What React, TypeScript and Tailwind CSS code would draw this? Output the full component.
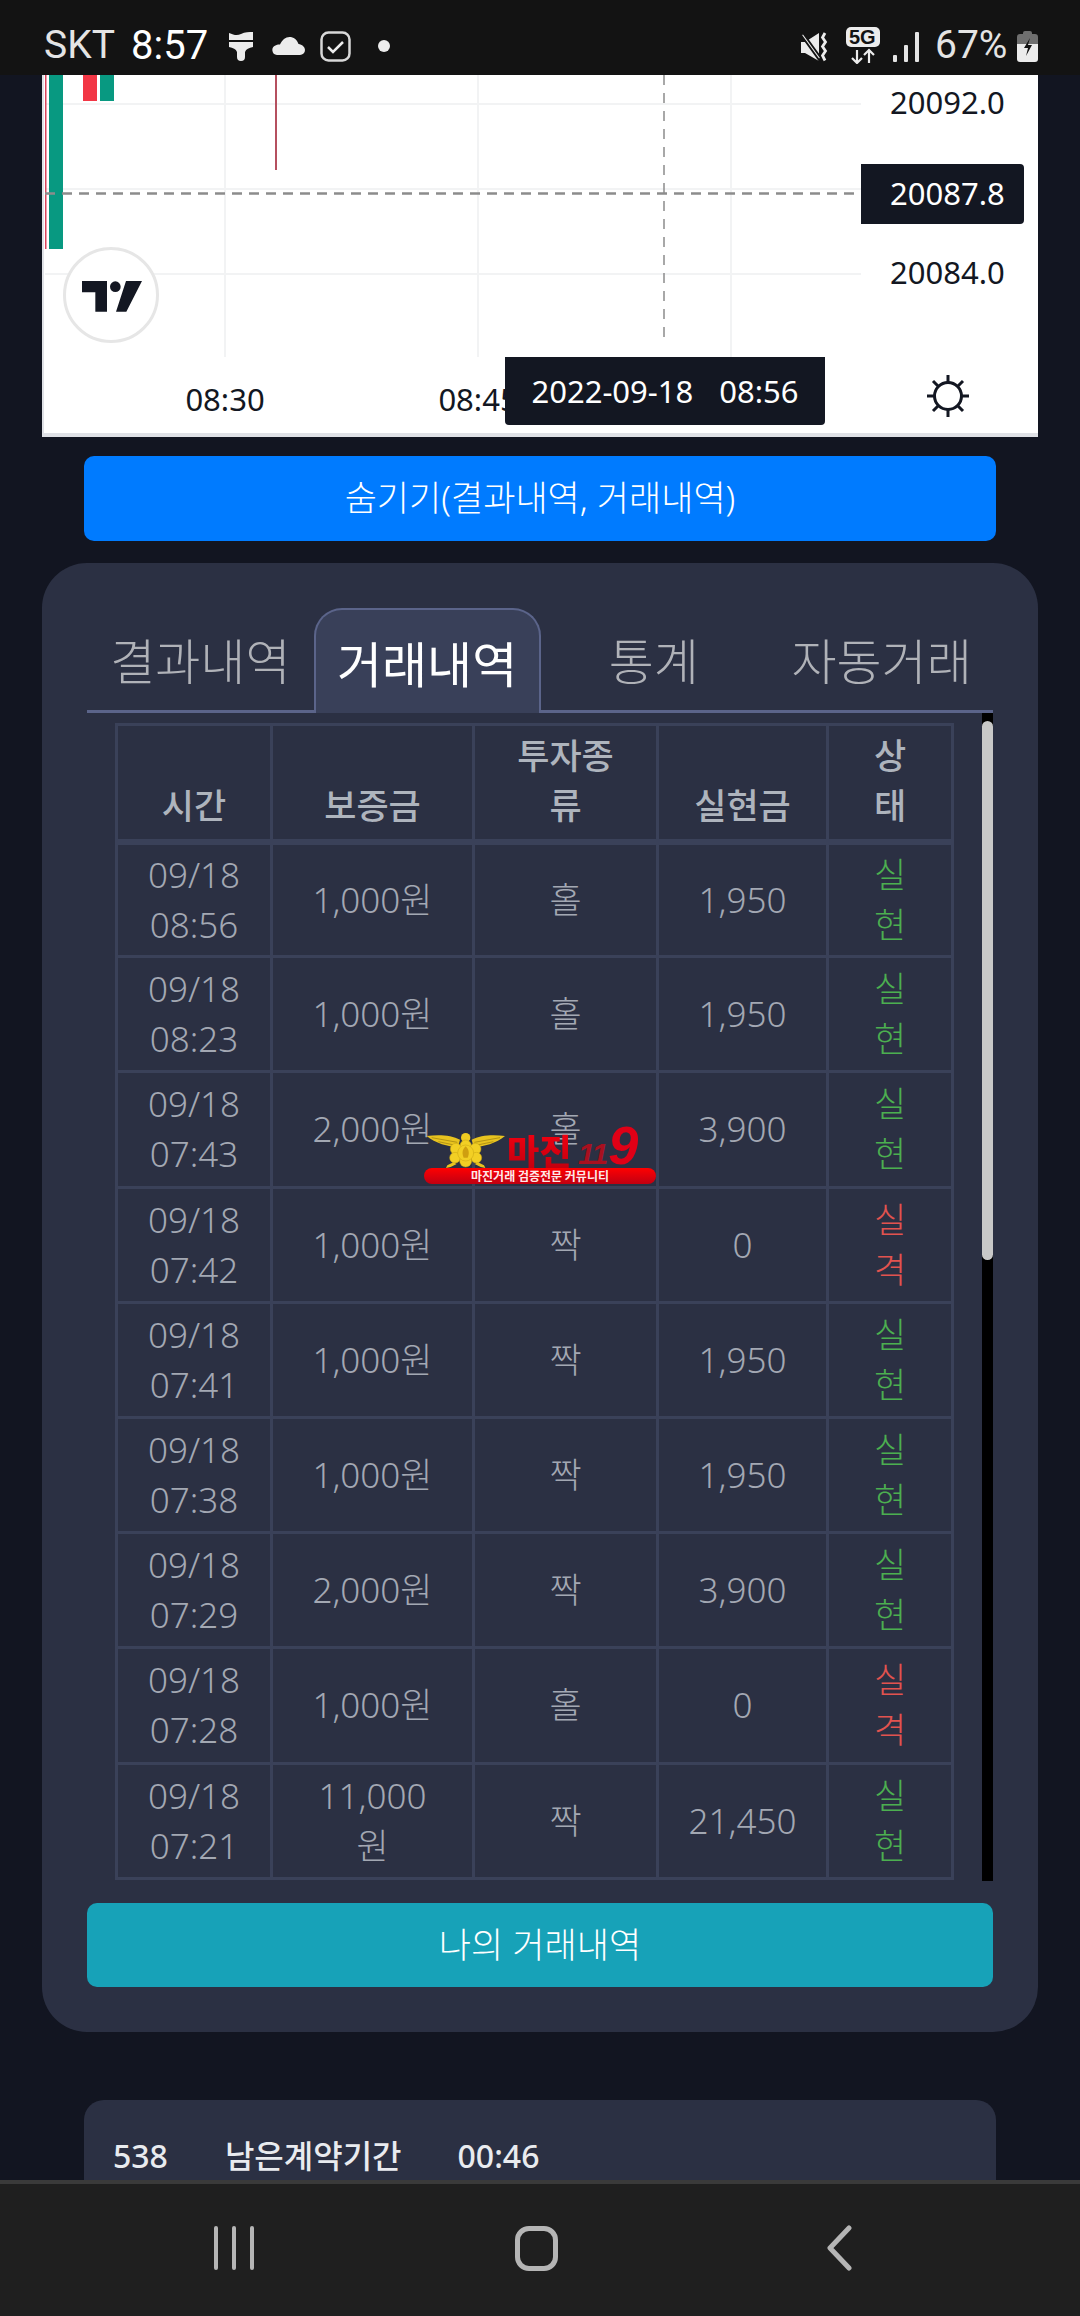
import React from "react";

const KR = "font-['Noto_Sans','Noto_Sans_CJK_KR',sans-serif]";
const CJK = "font-['Noto_Sans_CJK_KR','Noto_Sans',sans-serif]";

type Row = { d: string; t: string; a: React.ReactNode; k: string; r: string; win: boolean };
const rows: Row[] = [
  { d: "09/18", t: "08:56", a: "1,000원", k: "홀", r: "1,950", win: true },
  { d: "09/18", t: "08:23", a: "1,000원", k: "홀", r: "1,950", win: true },
  { d: "09/18", t: "07:43", a: "2,000원", k: "홀", r: "3,900", win: true },
  { d: "09/18", t: "07:42", a: "1,000원", k: "짝", r: "0", win: false },
  { d: "09/18", t: "07:41", a: "1,000원", k: "짝", r: "1,950", win: true },
  { d: "09/18", t: "07:38", a: "1,000원", k: "짝", r: "1,950", win: true },
  { d: "09/18", t: "07:29", a: "2,000원", k: "짝", r: "3,900", win: true },
  { d: "09/18", t: "07:28", a: "1,000원", k: "홀", r: "0", win: false },
  { d: "09/18", t: "07:21", a: <>11,000<br />원</>, k: "짝", r: "21,450", win: true },
];

function StatusBar() {
  return (
    <div className="relative h-[75px] shrink-0 bg-[#131313] font-['Roboto',sans-serif] text-[39px] leading-none">
      <span className="absolute left-[44px] top-[26px] text-[#e4e4e4]">SKT</span>
      <span className="absolute left-[131px] top-[26px] text-[40px] text-white">8:57</span>
      <svg className="absolute left-[228px] top-[31px]" width="26" height="31" viewBox="0 0 26 31" fill="#ececec">
        <path d="M1 2c5 2 8 3 12 1s8-2 12-2v8H1z" />
        <path d="M1 11h24v5c-4 1-7 2-8 5v5a4 4 0 0 1-8 0v-5c-1-3-4-4-8-5z" />
      </svg>
      <svg className="absolute left-[272px] top-[37px]" width="33" height="18" viewBox="0 0 33 18" fill="#ececec">
        <path d="M5 18a5 5 0 0 1-1-9.800C5.500 7.500 7 7.500 8 7.500 10 3 13.500 0 17.500 0s7.500 2.500 9 7c3.500.5 6.500 3 6.500 6a5 5 0 0 1-5 5z" />
      </svg>
      <svg className="absolute left-[320px] top-[31px]" width="31" height="31" viewBox="0 0 31 31" fill="none">
        <rect x="1.500" y="1.500" width="28" height="28" rx="7" stroke="#d8d8d8" strokeWidth="2.500" />
        <path d="M8 16l5 5 10-10" stroke="#ececec" strokeWidth="2.500" />
      </svg>
      <div className="absolute left-[378px] top-[40px] h-[12px] w-[12px] rounded-full bg-[#ececec]" />
      <svg className="absolute left-[800px] top-[32px]" width="30" height="30" viewBox="0 0 30 30" fill="#ececec">
        <path d="M1 10h4L19 1v28L5 21H1z" />
        <path d="M1 3l2-2 18 25-2 2z" stroke="#131313" strokeWidth="1.800" />
        <path d="M25 1l-2.500 4.500 3 4.500-3 4.500 3 4.500-3 4.500 2.500 5" fill="none" stroke="#ececec" strokeWidth="2.800" />
      </svg>
      <svg className="absolute left-[846px] top-[27px]" width="34" height="37" viewBox="0 0 34 37">
        <rect width="34" height="20" rx="5" fill="#ececec" />
        <path d="M11 23v13M6 31l5 5 5-5M23 36V23M18 28l5-5 5 5" fill="none" stroke="#ececec" strokeWidth="2.200" />
      </svg>
      <span className="absolute left-[849px] top-[27px] font-['Liberation_Sans',sans-serif] text-[20px] font-bold leading-[20px] text-[#131313]">5G</span>
      <svg className="absolute left-[893px] top-[32px]" width="26" height="30" viewBox="0 0 26 30" fill="#e4e4e4">
        <rect x="0" y="23" width="4" height="7" rx="1" />
        <rect x="11" y="13" width="4" height="17" rx="1" />
        <rect x="22" y="0" width="4" height="30" rx="1" />
      </svg>
      <span className="absolute left-[935px] top-[26px] text-[#e4e4e4]">67%</span>
      <svg className="absolute left-[1017px] top-[30px]" width="21" height="32" viewBox="0 0 21 32">
        <path d="M6 3a2 2 0 0 1 2-2h5a2 2 0 0 1 2 2v1h3a3 3 0 0 1 3 3v7H0V7a3 3 0 0 1 3-3h3z" fill="#6f6f6f" />
        <path d="M0 14h21v15a3 3 0 0 1-3 3H3a3 3 0 0 1-3-3z" fill="#ececec" />
        <path d="M13 8l-6 10h4l-2 8 6-11h-4z" fill="#131313" />
      </svg>
    </div>
  );
}

function Chart() {
  return (
    <div className="relative mx-[42px] h-[362px] shrink-0 overflow-hidden border-b-[4px] border-[#dfe1e6] bg-white font-['Noto_Sans',sans-serif] text-[31px] text-[#131722]">
      <svg className="absolute left-0 top-0" width="996" height="362" viewBox="0 0 996 362">
        <g stroke="#f2f3f4" strokeWidth="2" fill="none">
          <path d="M3 29H819M3 114H819M3 199H819" />
          <path d="M183 0V282M436 0V282M689 0V282" />
        </g>
        <rect x="0" y="0" width="2" height="358" fill="#dfe1e6" />
        <rect x="3" y="0" width="1.500" height="174" fill="#d9455c" />
        <rect x="7" y="0" width="14" height="174" fill="#089981" />
        <rect x="41" y="0" width="14" height="26" fill="#f23645" />
        <rect x="58" y="0" width="14" height="26" fill="#089981" />
        <rect x="233" y="0" width="2" height="95" fill="#b5505f" />
        <path d="M622 0V270" stroke="#8c8c8c" strokeWidth="1.500" strokeDasharray="10 8" />
        <path d="M3 118.500H819" stroke="#8c8c8c" strokeWidth="2.500" strokeDasharray="10 7" />
      </svg>
      <span className="absolute left-[848px] top-[7px] leading-[40px]">20092.0</span>
      <span className="absolute left-[848px] top-[177px] leading-[40px]">20084.0</span>
      <div className="absolute left-[819px] top-[89px] flex h-[60px] w-[163px] items-center rounded-r-[4px] bg-[#131722] pb-[2px] pl-[29px] text-white">20087.8</div>
      <div className="absolute left-[21px] top-[172px] h-[96px] w-[96px] rounded-full border-[3px] border-[#e6e6e6] bg-white" />
      <svg className="absolute left-[40px] top-[206px]" width="60" height="31" viewBox="0 0 180 93" fill="#131722">
        <path d="M0 0h75v92H40V34H0zM132 0h48l-47 92H102z" />
        <circle cx="100" cy="17" r="16" />
      </svg>
      <span className="absolute left-[141px] top-[304px] w-[84px] text-center leading-[40px]">08:30</span>
      <span className="absolute left-[394px] top-[304px] w-[84px] text-center leading-[40px]">08:45</span>
      <div className="absolute left-[463px] top-[282px] flex h-[68px] w-[320px] items-center justify-center gap-[26px] rounded-b-[4px] bg-[#131722] text-white">
        <span>2022-09-18</span>
        <span>08:56</span>
      </div>
      <svg className="absolute left-[884px] top-[299px]" width="44" height="44" viewBox="0 0 44 44" fill="none" stroke="#131722">
        <circle cx="22" cy="22" r="13.500" strokeWidth="3" />
        <path d="M22 1v7M22 36v7M1 22h7M36 22h7M7 7l5 5M32 32l5 5M37 7l-5 5M7 37l5-5" strokeWidth="3" />
      </svg>
    </div>
  );
}

function Tabs() {
  const base = `flex-1 text-center text-[49px] leading-[60px] ${CJK}`;
  return (
    <div className="flex h-[105px] border-b-[3px] border-[#5b648a]">
      <div className={`${base} pl-[2px] pt-[21px] font-light text-[#b0b2b8]`}>결과내역</div>
      <div className={`${base} mx-[2px] -mb-[3px] rounded-t-[28px] border-x-[2px] border-t-[2px] border-[#5b648a] bg-[#394059] pt-[22px] text-white`}>거래내역</div>
      <div className={`${base} pr-[5px] pt-[21px] font-light text-[#b0b2b8]`}>통계</div>
      <div className={`${base} pt-[21px] font-light text-[#b0b2b8]`}>자동거래</div>
    </div>
  );
}

function HistoryTable() {
  const cell = "border-[3px] border-[#3a4159] text-center align-middle";
  const head = `${cell} !align-bottom pb-[8px] font-medium`;
  return (
    <table className={`w-[836px] table-fixed border-collapse text-[35px] leading-[50px] ${KR}`}>
      <colgroup>
        <col className="w-[155px]" />
        <col className="w-[202px]" />
        <col className="w-[184px]" />
        <col className="w-[170px]" />
        <col className="w-[125px]" />
      </colgroup>
      <thead>
        <tr className="h-[117px] border-b-[6px] border-[#3a4159] text-[#aeb4bd]">
          <th className={head}>시간</th>
          <th className={head}>보증금</th>
          <th className={head}>투자종<br />류</th>
          <th className={head}>실현금</th>
          <th className={head}>상<br />태</th>
        </tr>
      </thead>
      <tbody className="font-light text-[#a3a8b3]">
        {rows.map((r, i) => (
          <tr key={i} className="h-[115.200px]">
            <td className={cell}>{r.d}<br />{r.t}</td>
            <td className={cell}>{r.a}</td>
            <td className={cell}>{r.k}</td>
            <td className={cell}>{r.r}</td>
            <td className={`${cell} ${r.win ? "text-[#4caf50]" : "text-[#e2534f]"}`}>
              {r.win ? <>실<br />현</> : <>실<br />격</>}
            </td>
          </tr>
        ))}
      </tbody>
    </table>
  );
}

function Watermark() {
  return (
    <div className={`absolute left-[424px] top-[1130px] h-[54px] w-[232px] ${CJK}`}>
      <svg className="absolute left-[-4px] top-[-5px]" width="120" height="65" viewBox="0 0 360 195">
        <path d="M20 33C55 28 95 30 120 44L114 66C85 66 45 54 20 33z" fill="#e8c31f" />
        <path d="M255 33C220 28 180 30 155 44L161 66C190 66 230 54 255 33z" fill="#e8c31f" />
        <path d="M35 38L112 52M55 50L112 62M240 38L163 52M220 50L163 62" stroke="#a88a12" strokeWidth="2.500" fill="none" />
        <circle cx="137" cy="38" r="14" fill="#f0cc22" />
        <g fill="#f2cf24" stroke="#c9a512" strokeWidth="1.500">
          <circle cx="137" cy="62" r="17" />
          <circle cx="108" cy="72" r="17" />
          <circle cx="166" cy="72" r="17" />
          <circle cx="105" cy="98" r="16" />
          <circle cx="169" cy="98" r="16" />
          <circle cx="137" cy="108" r="18" />
          <circle cx="137" cy="84" r="24" />
        </g>
        <path d="M137 64c10 10 12 20 6 34h-12c-6-14-4-24 6-34z" fill="#cf9f10" />
        <path d="M100 112l-18 9-4 8 14-3 18-9zM174 112l18 9 4 8-14-3-18-9z" fill="#e8c31f" />
      </svg>
      <span className="absolute left-[83px] top-[2px] bg-gradient-to-b from-[#f20010] to-[#c2000f] bg-clip-text text-[35px] font-black leading-[36px] text-transparent">마진</span>
      <span className="absolute left-[154px] top-[-13px] flex items-baseline font-['Liberation_Sans',sans-serif] font-bold italic leading-[56px]">
        <span className="text-[30px] tracking-[-1px] text-[#a8101f]">11</span>
        <span className="ml-[1px] text-[54px] text-[#e00016]">9</span>
      </span>
      <div className="absolute left-0 top-[38px] flex h-[16px] w-[232px] items-center justify-center rounded-full bg-gradient-to-b from-[#ff0000] to-[#c00010] text-[12px] font-bold leading-[16px] text-[#ffe8e8]">
        마진거래 검증전문 커뮤니티
      </div>
    </div>
  );
}

function NavBar() {
  return (
    <div className="flex h-[136px] shrink-0 items-center border-t-[4px] border-[#3a3a3a] bg-[#1f1f1f] pb-[4px] pl-[214px]">
      <div className="flex gap-[14px]">
        <div className="h-[44px] w-[4px] rounded-full bg-[#b5b5b5]" />
        <div className="h-[44px] w-[4px] rounded-full bg-[#b5b5b5]" />
        <div className="h-[44px] w-[4px] rounded-full bg-[#b5b5b5]" />
      </div>
      <div className="ml-[261px] h-[45px] w-[43px] rounded-[14px] border-[5px] border-[#b5b5b5]" />
      <svg className="ml-[268px]" width="26" height="46" viewBox="0 0 26 46" fill="none">
        <path d="M23 3L4 23l19 20" stroke="#b5b5b5" strokeWidth="5" strokeLinecap="round" strokeLinejoin="round" />
      </svg>
    </div>
  );
}

export default function App() {
  return (
    <div className={`relative flex h-[2316px] w-[1080px] flex-col overflow-hidden bg-[#121521] ${KR}`}>
      <StatusBar />
      <div className="flex min-h-0 flex-1 flex-col overflow-hidden">
        <Chart />
        <div className="mx-[84px] mt-[19px] flex h-[85px] shrink-0 items-center justify-center rounded-[10px] bg-[#007bff] text-[35px] font-light text-white">
          숨기기(결과내역, 거래내역)
        </div>
        <div className="mx-[42px] mt-[22px] shrink-0 rounded-[45px] bg-[#2b3043] px-[45px] pb-[45px] pt-[45px]">
          <Tabs />
          <div className="flex h-[1168px] items-start">
            <div className="flex-1 pl-[28px] pt-[10px]">
              <HistoryTable />
            </div>
            <div className="h-full w-[11px] bg-black pt-[8px]">
              <div className="h-[539px] rounded-full bg-[#c8c8c8]" />
            </div>
          </div>
          <div className="mt-[22px] flex h-[84px] items-center justify-center rounded-[10px] bg-[#17a2b8] text-[35px] font-light text-white">
            나의 거래내역
          </div>
        </div>
        <div className="mx-[84px] mt-[68px] h-[200px] shrink-0 rounded-t-[20px] bg-[#2b3043] px-[29px] pt-[33px] text-[32px] font-medium leading-[46px] text-[#e9ebef]">
          <span>538</span>
          <span className="ml-[57px]">남은계약기간</span>
          <span className="ml-[56px]">00:46</span>
        </div>
      </div>
      <NavBar />
      <Watermark />
    </div>
  );
}
